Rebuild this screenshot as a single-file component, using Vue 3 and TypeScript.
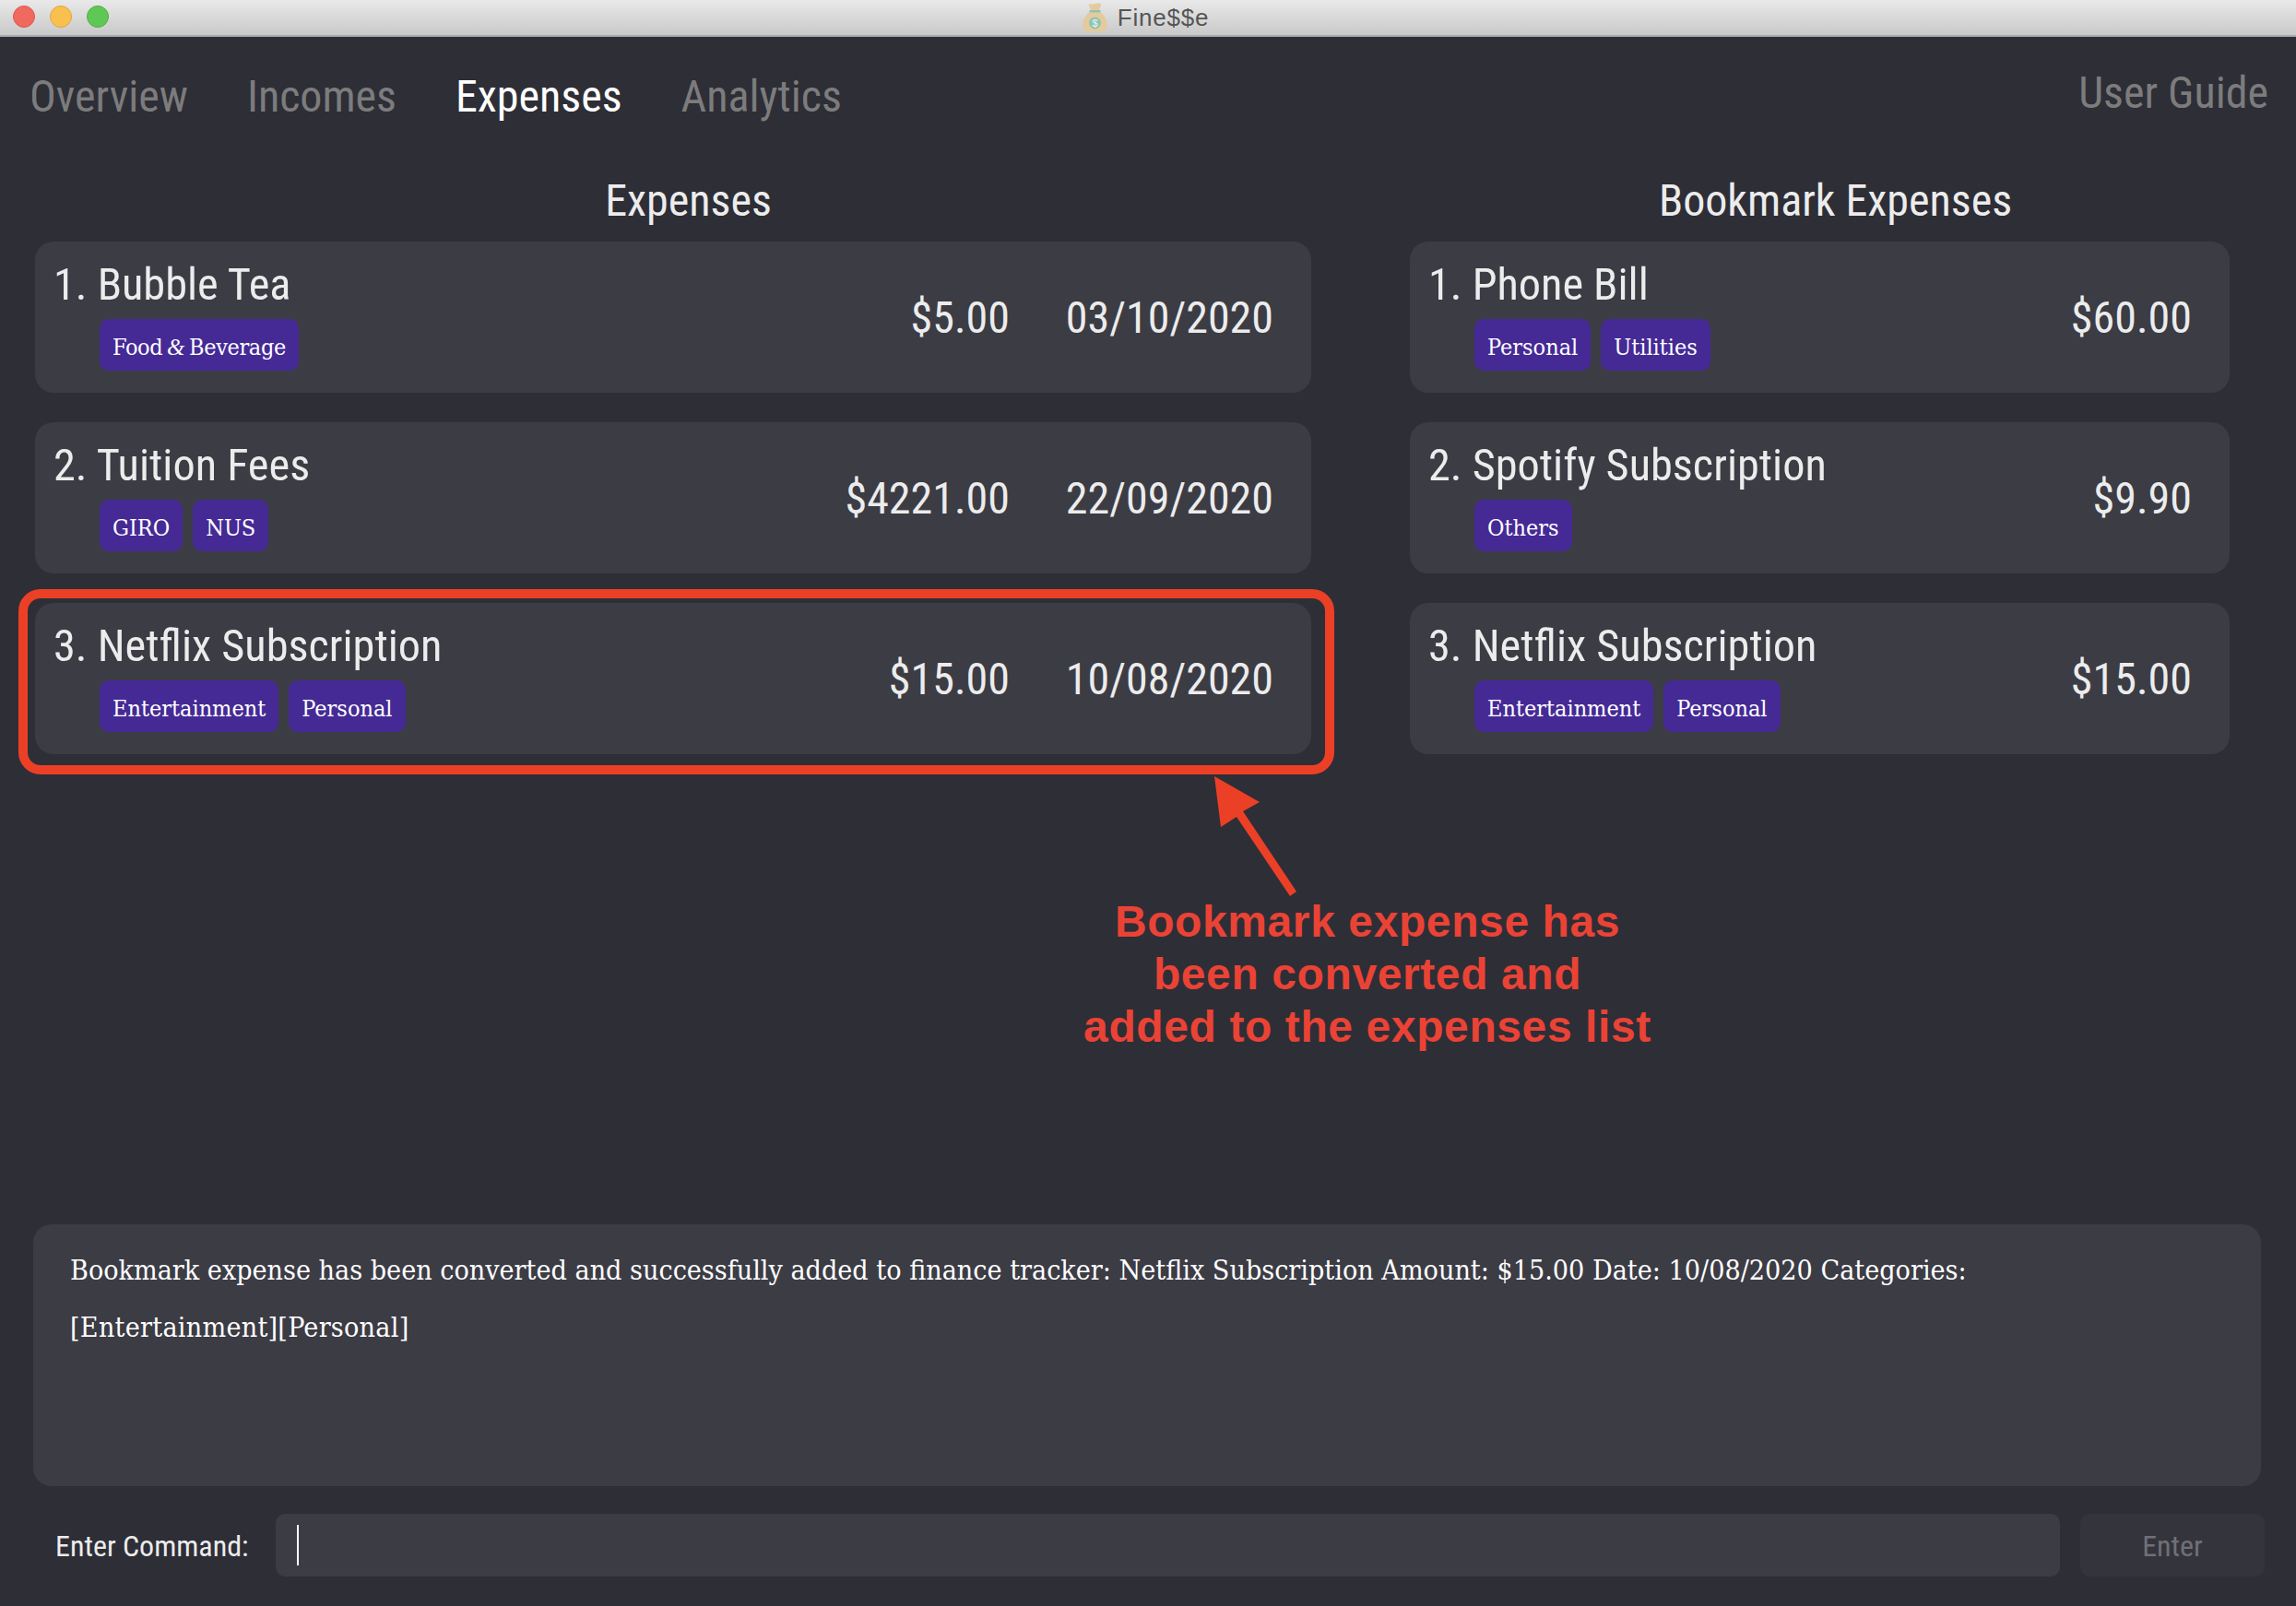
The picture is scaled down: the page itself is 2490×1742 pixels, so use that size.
<template>
  <div class="window">
    <header class="titlebar">
      <div class="lights">
        <span class="light red"></span>
        <span class="light yellow"></span>
        <span class="light green"></span>
      </div>
      <div class="title">
        <svg class="bag" viewBox="0 0 27 32" aria-hidden="true">
          <path fill="#e4cb9e" d="M7 1c2 1 4 .5 6.500 0s4.500-1 6.500 0c.5 2-1 5-2.500 7.500C22 11.500 27 17.500 27 24c0 5-3 7-6 7.500H6c-3-.5-6-2.500-6-7.500C0 17.500 5 11.500 9.500 8.500 8 6 6.500 3 7 1z" />
          <rect x="7.500" y="8" width="12" height="2.500" fill="#8fc5b2" />
          <circle cx="13.500" cy="22" r="6.500" fill="#8fc5b2" />
          <text x="13.500" y="26" class="bag-sign">$</text>
        </svg>
        <span>Fine$$e</span>
      </div>
    </header>

    <nav class="tabs">
      <div class="tab-list">
        <span v-for="tab in tabs" :key="tab" class="tab" :class="{ active: tab === 'Expenses' }">{{ tab }}</span>
      </div>
      <span class="guide">User Guide</span>
    </nav>

    <main class="lists">
      <section class="column left">
        <h2 class="heading">Expenses</h2>
        <div class="cards">
          <article v-for="(item, i) in expenses" :key="item.name" class="card">
            <div class="card-main">
              <div class="name">{{ i + 1 }}. {{ item.name }}</div>
              <div class="tags">
                <span v-for="tag in item.tags" :key="tag" class="tag" :class="{ tight: tag.includes('&') }">
                  <template v-for="(part, p) in tag.split('&')" :key="p"><span v-if="p > 0" class="amp">&amp;</span>{{ part }}</template>
                </span>
              </div>
            </div>
            <div class="amount">{{ item.amount }}</div>
            <div class="date">{{ item.date }}</div>
          </article>
        </div>
      </section>
      <section class="column right">
        <h2 class="heading">Bookmark Expenses</h2>
        <div class="cards">
          <article v-for="(item, i) in bookmarks" :key="item.name" class="card">
            <div class="card-main">
              <div class="name">{{ i + 1 }}. {{ item.name }}</div>
              <div class="tags">
                <span v-for="tag in item.tags" :key="tag" class="tag">{{ tag }}</span>
              </div>
            </div>
            <div class="amount">{{ item.amount }}</div>
          </article>
        </div>
      </section>
    </main>

    <section class="result">
      Bookmark expense has been converted and successfully added to finance tracker: Netflix Subscription Amount: $15.00 Date: 10/08/2020 Categories:
      <span class="result-tags">[Entertainment][Personal]</span>
    </section>

    <footer class="command">
      <label class="command-label">Enter Command:</label>
      <div class="command-input"><span class="caret"></span></div>
      <div class="enter">Enter</div>
    </footer>

    <!-- annotation drawn over the screenshot -->
    <div class="highlight"></div>
    <svg class="arrow" viewBox="0 0 100 140" aria-hidden="true">
      <polygon fill="#ec4026" points="4,2 53,30 35,40 93,127 86,132 28,46 11,57" />
    </svg>
    <div class="note">Bookmark expense has<br />been converted and<br />added to the expenses list</div>
  </div>
</template>

<script setup lang="ts">
interface Entry {
  name: string
  tags: string[]
  amount: string
  date?: string
}

const tabs = ['Overview', 'Incomes', 'Expenses', 'Analytics']

const expenses: Entry[] = [
  { name: 'Bubble Tea', tags: ['Food & Beverage'], amount: '$5.00', date: '03/10/2020' },
  { name: 'Tuition Fees', tags: ['GIRO', 'NUS'], amount: '$4221.00', date: '22/09/2020' },
  { name: 'Netflix Subscription', tags: ['Entertainment', 'Personal'], amount: '$15.00', date: '10/08/2020' }
]

const bookmarks: Entry[] = [
  { name: 'Phone Bill', tags: ['Personal', 'Utilities'], amount: '$60.00' },
  { name: 'Spotify Subscription', tags: ['Others'], amount: '$9.90' },
  { name: 'Netflix Subscription', tags: ['Entertainment', 'Personal'], amount: '$15.00' }
]
</script>

<style>
html,
body {
  margin: 0;
  background: #2e2e37;
}
</style>

<style scoped>
.window {
  position: relative;
  width: 2490px;
  height: 1742px;
  display: flex;
  flex-direction: column;
  background: #2e2e37;
  font-family: "Roboto Condensed", "Liberation Sans Narrow", Roboto, sans-serif;
  font-stretch: condensed;
  color: #ececec;
  overflow: hidden;
  border-radius: 0 0 10px 10px;
}

.titlebar {
  position: relative;
  height: 38px;
  flex: none;
  display: flex;
  align-items: center;
  justify-content: center;
  background: linear-gradient(#e9e9e9, #c9c9c9);
  border-bottom: 2px solid #a9a9a9;
}

.lights {
  position: absolute;
  left: 14px;
  top: 6px;
  display: flex;
  gap: 16px;
}

.light {
  width: 24px;
  height: 24px;
  box-sizing: border-box;
  border-radius: 50%;
  border: 1px solid;
}

.red { background: #f1685f; border-color: #dc5a52; }
.yellow { background: #fac04f; border-color: #e3a53c; }
.green { background: #5fc855; border-color: #4fae46; }

.title {
  display: flex;
  align-items: center;
  gap: 11px;
  margin-right: 5px;
  font-family: "Liberation Sans", sans-serif;
  font-stretch: normal;
  font-size: 26px;
  letter-spacing: 0.8px;
  color: #555;
}

.bag {
  width: 27px;
  height: 32px;
}

.bag-sign {
  font-size: 11px;
  text-anchor: middle;
  fill: #f2f2f2;
  letter-spacing: 0;
}

.tabs {
  height: 119px;
  flex: none;
  display: flex;
  justify-content: space-between;
  padding: 0 30px 0 32px;
  font-size: 48px;
}

.tab-list {
  display: flex;
  gap: 64px;
  padding-top: 36px;
}

.tab {
  color: #7c7c7c;
}

.tab.active {
  color: #fff;
}

.guide {
  padding-top: 32px;
  color: #7c7c7c;
}

.lists {
  flex: 1;
  display: flex;
  padding-left: 38px;
}

.column.left {
  width: 1384px;
  margin-right: 107px;
}

.column.right {
  width: 889px;
}

.heading {
  margin: 0;
  height: 72px;
  padding-top: 31px;
  line-height: 56px;
  font-size: 48px;
  font-weight: 400;
  text-align: center;
  color: #ececec;
}

.column.left .heading {
  padding-left: 33px;
}

.column.right .heading {
  padding-left: 34px;
}

.cards {
  display: flex;
  flex-direction: column;
  gap: 32px;
}

.card {
  height: 164px;
  box-sizing: border-box;
  display: flex;
  align-items: center;
  padding: 0 41px 0 20px;
  background: #3c3c45;
  border-radius: 20px;
  font-size: 48px;
}

.card-main {
  flex: 1;
  align-self: flex-start;
  padding-top: 19px;
}

.name {
  line-height: 56px;
  font-size: 48.3px;
}

.tags {
  display: flex;
  gap: 11px;
  margin-top: 9px;
  padding-left: 50px;
}

.tag {
  height: 56px;
  line-height: 62px;
  padding: 0 14px;
  border-radius: 10px;
  background: #452a96;
  font-family: "DejaVu Serif", serif;
  font-size: 25px;
  color: #fff;
}

.tag.tight {
  letter-spacing: -0.35px;
}

.amp {
  margin: 0 -2px;
  font-family: "Liberation Serif", serif;
  font-style: italic;
}

.date {
  width: 286px;
  text-align: right;
}

.result {
  flex: none;
  width: 2416px;
  height: 284px;
  box-sizing: border-box;
  margin: 0 0 30px 36px;
  padding: 19px 229px 0 40px;
  background: #3c3c45;
  border-radius: 20px;
  font-family: "DejaVu Serif", serif;
  font-size: 30.15px;
  line-height: 62px;
  color: #fff;
}

.result-tags {
  letter-spacing: 0.25px;
}

.command {
  flex: none;
  height: 100px;
  display: flex;
  align-items: flex-start;
  padding-left: 60px;
  font-size: 32px;
}

.command-label {
  width: 239px;
  line-height: 70px;
}

.command-input {
  width: 1935px;
  height: 68px;
  box-sizing: border-box;
  padding: 12px 0 0 23px;
  background: #3c3c45;
  border-radius: 10px;
}

.caret {
  display: block;
  width: 2px;
  height: 44px;
  background: #fff;
}

.enter {
  width: 200px;
  height: 68px;
  margin-left: 22px;
  line-height: 70px;
  text-align: center;
  background: #34343c;
  border-radius: 10px;
  color: #707076;
}

.highlight {
  position: absolute;
  left: 20px;
  top: 639px;
  width: 1427px;
  height: 201px;
  box-sizing: border-box;
  border: 10px solid #ec4026;
  border-radius: 24px;
}

.arrow {
  position: absolute;
  left: 1313px;
  top: 840px;
  width: 100px;
  height: 140px;
}

.note {
  position: absolute;
  left: 1083px;
  top: 971px;
  width: 800px;
  text-align: center;
  font-family: "Liberation Sans", sans-serif;
  font-stretch: normal;
  font-weight: 700;
  font-size: 48px;
  line-height: 57px;
  letter-spacing: 0.6px;
  color: #ea4335;
}
</style>
